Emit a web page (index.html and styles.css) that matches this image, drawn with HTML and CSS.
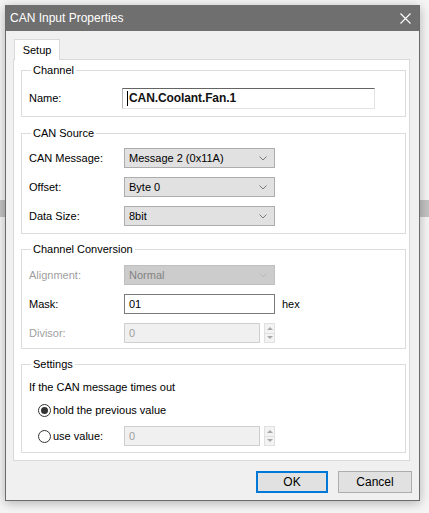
FILE: index.html
```html
<!DOCTYPE html>
<html>
<head>
<meta charset="utf-8">
<link rel="stylesheet" href="styles.css">
</head>
<body>
<div class="window">
  <div class="titlebar">
    <span class="title">CAN Input Properties</span>
    <svg class="close" width="11" height="11" viewBox="0 0 11 11"><path d="M0.5 0.5 L10.5 10.5 M10.5 0.5 L0.5 10.5" stroke="#fff" stroke-width="1.1" fill="none"/></svg>
  </div>
  <div class="client">
    <div class="tabs"><div class="tab">Setup</div></div>
    <div class="panel">
      <fieldset class="group g-channel">
        <legend>Channel</legend>
        <div class="body">
          <div class="row">
            <span class="lbl">Name:</span>
            <div class="namebox"><span class="caret"></span>CAN.Coolant.Fan.1</div>
          </div>
        </div>
      </fieldset>

      <fieldset class="group g-source">
        <legend>CAN Source</legend>
        <div class="body">
          <div class="row">
            <span class="lbl">CAN Message:</span>
            <div class="combo"><span>Message 2 (0x11A)</span><svg width="8" height="5" viewBox="0 0 8 5"><path d="M0.5 0.5 L4 4 L7.5 0.5" fill="none" stroke="#7a7a7a"/></svg></div>
          </div>
          <div class="row">
            <span class="lbl">Offset:</span>
            <div class="combo"><span>Byte 0</span><svg width="8" height="5" viewBox="0 0 8 5"><path d="M0.5 0.5 L4 4 L7.5 0.5" fill="none" stroke="#7a7a7a"/></svg></div>
          </div>
          <div class="row">
            <span class="lbl">Data Size:</span>
            <div class="combo"><span>8bit</span><svg width="8" height="5" viewBox="0 0 8 5"><path d="M0.5 0.5 L4 4 L7.5 0.5" fill="none" stroke="#7a7a7a"/></svg></div>
          </div>
        </div>
      </fieldset>

      <fieldset class="group g-conv">
        <legend>Channel Conversion</legend>
        <div class="body">
          <div class="row">
            <span class="lbl disabled">Alignment:</span>
            <div class="combo off"><span>Normal</span><svg width="8" height="5" viewBox="0 0 8 5"><path d="M0.5 0.5 L4 4 L7.5 0.5" fill="none" stroke="#b8b8b8"/></svg></div>
          </div>
          <div class="row">
            <span class="lbl">Mask:</span>
            <div class="textbox">01</div>
            <span class="unit">hex</span>
          </div>
          <div class="row">
            <span class="lbl disabled">Divisor:</span>
            <div class="spin">
              <div class="spin-text">0</div>
              <div class="spin-btns"><span class="up"></span><span class="down"></span></div>
            </div>
          </div>
        </div>
      </fieldset>

      <fieldset class="group g-settings">
        <legend>Settings</legend>
        <div class="body">
          <div class="textrow">If the CAN message times out</div>
          <div class="row">
            <span class="radio-lbl"><span class="radio checked"></span>hold the previous value</span>
          </div>
          <div class="row">
            <span class="radio-lbl fixed"><span class="radio"></span>use value:</span>
            <div class="spin">
              <div class="spin-text">0</div>
              <div class="spin-btns"><span class="up"></span><span class="down"></span></div>
            </div>
          </div>
        </div>
      </fieldset>
    </div>
    <div class="buttons">
      <button class="btn ok">OK</button>
      <button class="btn cancel">Cancel</button>
    </div>
  </div>
</div>
</body>
</html>
```

FILE: styles.css
```css
html, body {
  margin: 0;
  padding: 0;
}
body {
  width: 429px;
  height: 513px;
  overflow: hidden;
  background:
    linear-gradient(to bottom, transparent 200px, #c2c2c2 200px, #c2c2c2 217px, transparent 217px),
    #f5f5f5;
  font-family: "Liberation Sans", Arial, sans-serif;
  font-size: 11px;
  color: #000;
}
.window {
  margin: 5px 0 0 5px;
  width: 413px;
  border: 1px solid #6b6b6b;
  border-top-color: #6f6f6f;
  background: #f0f0f0;
  box-shadow: 0 2px 10px rgba(0, 0, 0, 0.28);
}
.titlebar {
  height: 25px;
  background: #6f6f6f;
  display: flex;
  align-items: center;
  justify-content: space-between;
  padding: 0 8px 0 4px;
  color: #fff;
  font-size: 12px;
}
.title {
  margin-top: -1px;
}
.close {
  display: block;
  margin-top: -1px;
}
.client {
  padding: 8px 9px 7px 7px;
}
.tabs {
  display: flex;
  height: 20px;
  padding-left: 1px;
}
.tab {
  position: relative;
  z-index: 1;
  box-sizing: border-box;
  width: 46px;
  height: 21px;
  border: 1px solid #d9d9d9;
  border-bottom: none;
  background: #fff;
  display: flex;
  align-items: center;
  justify-content: center;
}
.panel {
  box-sizing: border-box;
  width: 397px;
  border: 1px solid #d9d9d9;
  background: #fff;
  padding: 3px 3px 7px 7px;
}
.group {
  margin: 0;
  padding: 0;
  min-width: 0;
  border: 1px solid #dcdcdc;
}
.group + .group {
  margin-top: 8px;
}
.g-source {
  margin-top: 9px !important;
}
legend {
  margin-left: 9px;
  padding: 0 2px;
  line-height: 14px;
}
.body {
  display: flex;
  flex-direction: column;
  gap: 9px;
  padding: 0 7px 0 7px;
}
.g-channel .body { padding-top: 11px; padding-bottom: 8px; }
.g-source .body { padding-top: 8px; padding-bottom: 7px; }
.g-conv .body { padding-top: 9px; padding-bottom: 5px; }
.g-settings .body { padding-top: 8px; padding-bottom: 6px; gap: 5px; }
.g-settings .body .row + .row { margin-top: 1px; }

.row {
  display: flex;
  align-items: center;
  height: 20px;
}
.lbl {
  width: 95px;
  flex: none;
}
.disabled {
  color: #a0a0a0;
}
.namebox {
  box-sizing: border-box;
  margin-left: -2px;
  width: 253px;
  height: 21px;
  border: 1px solid #e3e3e3;
  border-top-color: #646464;
  border-left-color: #b4b4b4;
  background: #fff;
  display: flex;
  align-items: center;
  padding-left: 4px;
  font-size: 12px;
  font-weight: bold;
  letter-spacing: -0.1px;
  color: #111;
}
.caret {
  width: 1px;
  height: 15px;
  background: #000;
  margin-right: 1px;
}
.combo {
  box-sizing: border-box;
  width: 151px;
  height: 20px;
  border: 1px solid #adadad;
  background: #e1e1e1;
  display: flex;
  align-items: center;
  justify-content: space-between;
  padding: 0 7px 0 4px;
}
.combo svg {
  display: block;
}
.combo.off {
  background: #cccccc;
  border-color: #bfbfbf;
  color: #838383;
}
.textbox {
  box-sizing: border-box;
  width: 151px;
  height: 20px;
  border: 1px solid #7a7a7a;
  background: #fff;
  display: flex;
  align-items: center;
  padding-left: 4px;
}
.unit {
  margin-left: 7px;
}
.spin {
  width: 151px;
  height: 20px;
  display: flex;
  align-items: stretch;
}
.spin-text {
  box-sizing: border-box;
  width: 136px;
  border: 1px solid #cfcfcf;
  background: #f0f0f0;
  color: #a0a0a0;
  display: flex;
  align-items: center;
  padding-left: 4px;
}
.spin-btns {
  box-sizing: border-box;
  width: 11px;
  margin-left: 4px;
  border: 1px solid #e0e0e0;
  background: #f3f3f3;
  display: flex;
  flex-direction: column;
}
.spin-btns span {
  flex: 1;
  display: flex;
  align-items: center;
  justify-content: center;
}
.spin-btns .up {
  border-bottom: 1px solid #e0e0e0;
}
.spin-btns .up::before,
.spin-btns .down::before {
  content: "";
  width: 0;
  height: 0;
  border-left: 3px solid transparent;
  border-right: 3px solid transparent;
}
.spin-btns .up::before {
  border-bottom: 3px solid #a8a8a8;
}
.spin-btns .down::before {
  border-top: 3px solid #a8a8a8;
}
.textrow {
  height: 16px;
  line-height: 16px;
}
.radio-lbl {
  display: flex;
  align-items: center;
  padding-left: 9px;
}
.radio-lbl.fixed {
  width: 86px;
  flex: none;
}
.radio {
  box-sizing: border-box;
  width: 13px;
  height: 13px;
  border: 1px solid #333;
  border-radius: 50%;
  background: #fff;
  margin-right: 2px;
  display: flex;
  align-items: center;
  justify-content: center;
}
.radio.checked::after {
  content: "";
  width: 7px;
  height: 7px;
  border-radius: 50%;
  background: #333;
}
.buttons {
  margin-top: 10px;
  margin-right: -2px;
  display: flex;
  justify-content: flex-end;
  gap: 10px;
}
.btn {
  box-sizing: border-box;
  height: 22px;
  border: 1px solid #adadad;
  background: #e1e1e1;
  font-family: "Liberation Sans", Arial, sans-serif;
  font-size: 12px;
  color: #000;
  padding: 0;
}
.ok {
  width: 72px;
  border: 2px solid #0078d7;
}
.cancel {
  width: 74px;
}
```
